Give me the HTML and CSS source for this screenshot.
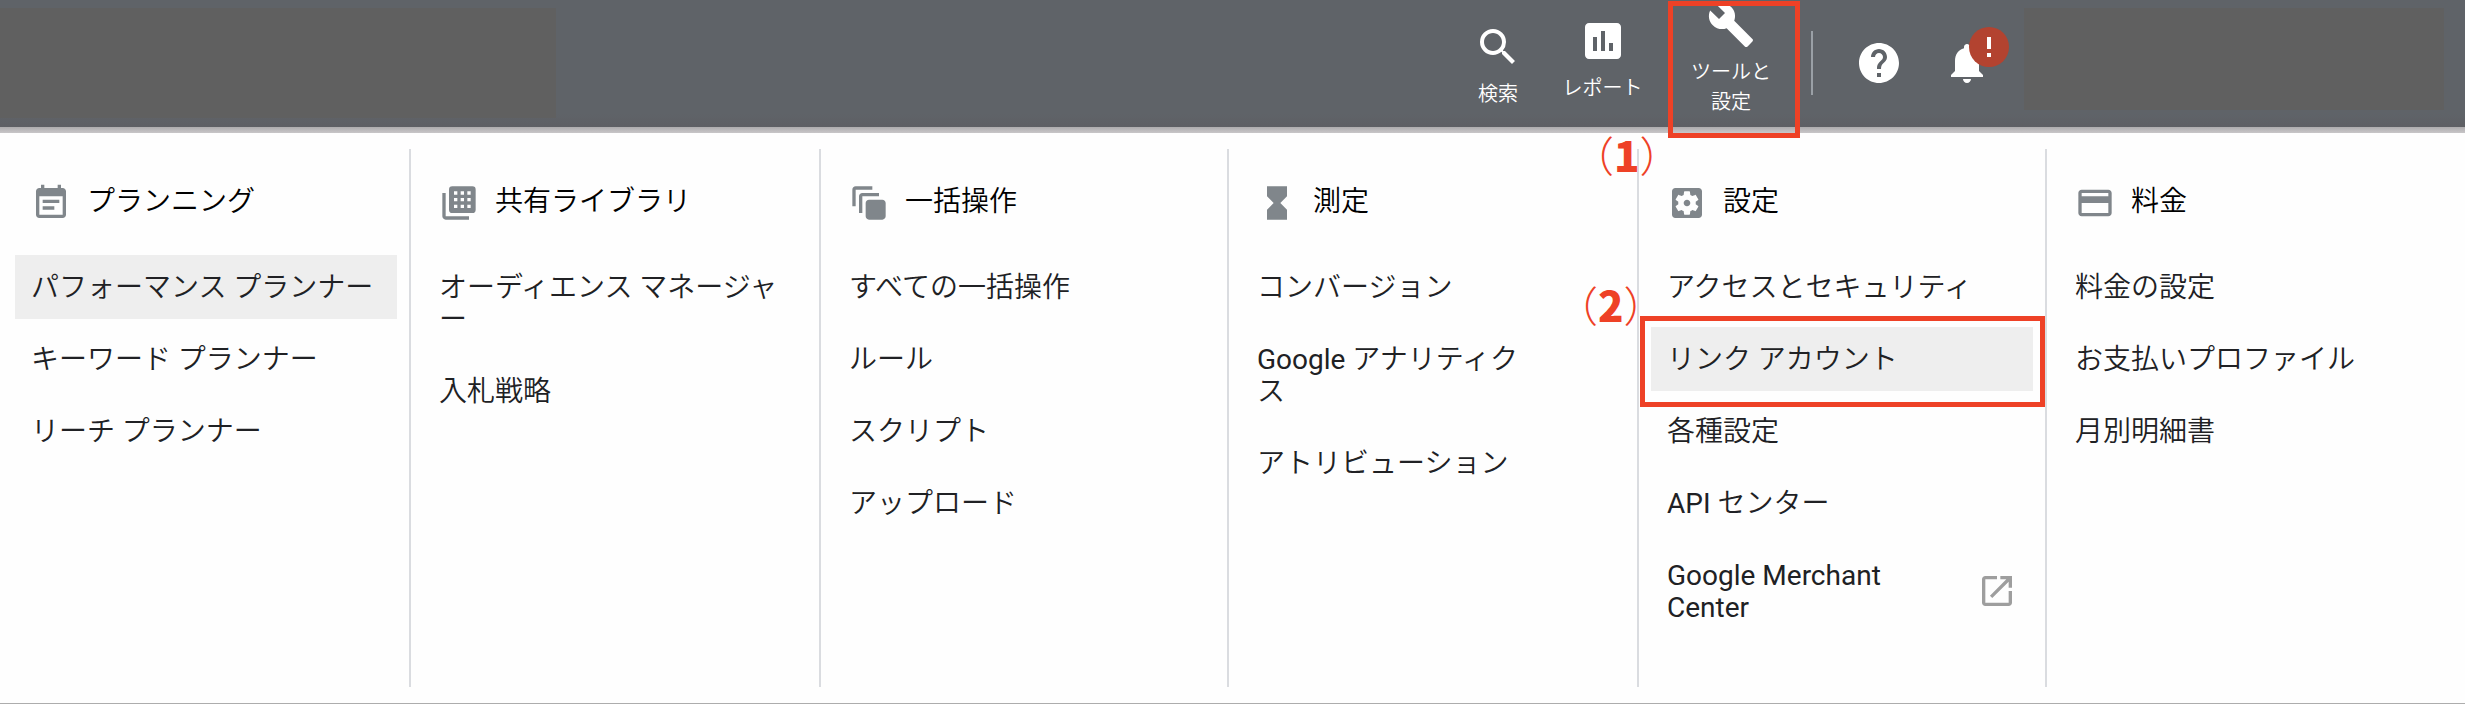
FILE: index.html
```html
<!DOCTYPE html>
<html lang="ja">
<head>
<meta charset="utf-8">
<title>ツールと設定</title>
<link rel="stylesheet" href="styles.css">
</head>
<body>
<header class="topbar">
  <div class="account-block"></div>
  <nav class="actions">
    <a class="action action-search">
      <svg class="icon-lg" viewBox="0 0 24 24"><path d="M15.5 14h-.79l-.28-.27A6.471 6.471 0 0 0 16 9.5 6.5 6.5 0 1 0 9.5 16c1.61 0 3.09-.59 4.23-1.57l.27.28v.79l5 4.99L20.49 19l-4.99-5zm-6 0C7.01 14 5 11.99 5 9.5S7.01 5 9.5 5 14 7.01 14 9.5 11.99 14 9.5 14z"/></svg>
      <span>検索</span>
    </a>
    <a class="action action-report">
      <svg class="icon-lg" viewBox="0 0 24 24"><path d="M19 3H5c-1.1 0-2 .9-2 2v14c0 1.1.9 2 2 2h14c1.1 0 2-.9 2-2V5c0-1.1-.9-2-2-2zM9 17H7v-7h2v7zm4 0h-2V7h2v10zm4 0h-2v-4h2v4z"/></svg>
      <span>レポート</span>
    </a>
    <a class="action action-tools">
      <svg class="icon-lg" viewBox="0 0 24 24"><path d="M22.7 19l-9.1-9.1c.9-2.3.4-5-1.5-6.9-2-2-5-2.4-7.4-1.3L9 6 6 9 1.6 4.7C.4 7.1.9 10.1 2.9 12.1c1.9 1.9 4.6 2.4 6.9 1.5l9.1 9.1c.4.4 1 .4 1.4 0l2.3-2.3c.5-.4.5-1.1.1-1.4z"/></svg>
      <span>ツールと<br>設定</span>
    </a>
  </nav>
  <div class="separator"></div>
  <svg class="icon-lg help" viewBox="0 0 24 24"><path d="M12 2C6.48 2 2 6.48 2 12s4.48 10 10 10 10-4.48 10-10S17.52 2 12 2zm1 17h-2v-2h2v2zm2.07-7.75l-.9.92C13.45 12.9 13 13.5 13 15h-2v-.5c0-1.1.45-2.1 1.17-2.83l1.24-1.26c.37-.36.59-.86.59-1.41 0-1.1-.9-2-2-2s-2 .9-2 2H8c0-2.21 1.79-4 4-4s4 1.79 4 4c0 .88-.36 1.68-.93 2.25z"/></svg>
  <div class="bell">
    <svg class="icon-lg" viewBox="0 0 24 24"><path d="M12 22c1.1 0 2-.9 2-2h-4c0 1.1.89 2 2 2zm6-6v-5c0-3.07-1.64-5.64-4.5-6.32V4c0-.83-.67-1.5-1.5-1.5s-1.5.67-1.5 1.5v.68C7.63 5.36 6 7.92 6 11v5l-2 2v1h16v-1l-2-2z"/></svg>
    <svg class="alert" viewBox="0 0 40 40"><circle cx="20" cy="20" r="20" fill="#b34330"/><path fill="#fff" d="M18 10h4v12h-4zM18 26h4v4h-4z"/></svg>
  </div>
  <div class="profile-block"></div>
</header>
<div class="shadow-strip"></div>

<main class="panel">
  <section class="column">
    <h2 class="heading">
      <svg class="icon" viewBox="0 0 24 24"><path d="M17 10H7v2h10v-2zm2-7h-1V1h-2v2H8V1H6v2H5c-1.11 0-2 .9-2 2v14c0 1.1.89 2 2 2h14c1.1 0 2-.9 2-2V5c0-1.1-.9-2-2-2zm0 16H5V8h14v11zm-5-5H7v2h7v-2z"/></svg>
      <span>プランニング</span>
    </h2>
    <a class="item active">パフォーマンス プランナー</a>
    <a class="item">キーワード プランナー</a>
    <a class="item">リーチ プランナー</a>
  </section>
  <section class="column">
    <h2 class="heading">
      <svg class="icon" viewBox="0 0 24 24"><path d="M4 6H2v14c0 1.1.9 2 2 2h14v-2H4V6z"/><path fill-rule="evenodd" d="M8 2h12a2 2 0 0 1 2 2v12a2 2 0 0 1-2 2H8a2 2 0 0 1-2-2V4a2 2 0 0 1 2-2zM9 5v2h2V5zm4 0v2h2V5zm4 0v2h2V5zM9 9v2h2V9zm4 0v2h2V9zm4 0v2h2V9zM9 13v2h2v-2zm4 0v2h2v-2zm4 0v2h2v-2z"/></svg>
      <span>共有ライブラリ</span>
    </h2>
    <a class="item">オーディエンス マネージャ<br>ー</a>
    <a class="item">入札戦略</a>
  </section>
  <section class="column narrow">
    <h2 class="heading">
      <svg class="icon" viewBox="0 0 24 24"><path d="M14 2H4c-1.11 0-2 .9-2 2v10h2V4h10V2zm4 4H8c-1.11 0-2 .9-2 2v10h2V8h10V6zm2 4h-8c-1.11 0-2 .9-2 2v8c0 1.1.89 2 2 2h8c1.1 0 2-.9 2-2v-8c0-1.1-.9-2-2-2z"/></svg>
      <span>一括操作</span>
    </h2>
    <a class="item">すべての一括操作</a>
    <a class="item">ルール</a>
    <a class="item">スクリプト</a>
    <a class="item">アップロード</a>
  </section>
  <section class="column">
    <h2 class="heading">
      <svg class="icon" viewBox="0 0 24 24"><path d="M6 2v6h.01L6 8.01 10 12l-4 4 .01.01H6V22h12v-5.99h-.01L18 16l-4-4 4-3.99-.01-.01H18V2H6z"/></svg>
      <span>測定</span>
    </h2>
    <a class="item">コンバージョン</a>
    <a class="item"><span class="latin">Google </span>アナリティク<br>ス</a>
    <a class="item">アトリビューション</a>
  </section>
  <section class="column narrow">
    <h2 class="heading">
      <svg class="icon" viewBox="0 0 24 24"><path d="M12 10c-1.1 0-2 .9-2 2s.9 2 2 2 2-.9 2-2-.9-2-2-2zm7-7H5c-1.11 0-2 .9-2 2v14c0 1.1.89 2 2 2h14c1.11 0 2-.9 2-2V5c0-1.1-.89-2-2-2zm-1.75 9c0 .23-.02.46-.05.68l1.48 1.16c.13.11.17.3.08.45l-1.4 2.42c-.09.15-.27.21-.43.15l-1.74-.7c-.36.28-.76.51-1.18.69l-.26 1.85c-.03.17-.18.3-.35.3h-2.8c-.17 0-.32-.13-.35-.29l-.26-1.85c-.43-.18-.82-.41-1.18-.69l-1.74.7c-.16.06-.34 0-.43-.15l-1.4-2.42c-.09-.15-.05-.34.08-.45l1.48-1.16c-.03-.23-.05-.46-.05-.69 0-.23.02-.46.05-.68l-1.48-1.16c-.13-.11-.17-.3-.08-.45l1.4-2.42c.09-.15.27-.21.43-.15l1.74.7c.36-.28.76-.51 1.18-.69l.26-1.85c.03-.17.18-.3.35-.3h2.8c.17 0 .32.13.35.29l.26 1.85c.43.18.82.41 1.18.69l1.74-.7c.16-.06.34 0 .43.15l1.4 2.42c.09.15.05.34-.08.45l-1.48 1.16c.03.23.05.46.05.69z"/></svg>
      <span>設定</span>
    </h2>
    <a class="item">アクセスとセキュリティ</a>
    <a class="item active">リンク アカウント</a>
    <a class="item">各種設定</a>
    <a class="item"><span class="latin">API </span>センター</a>
    <a class="item external"><span class="latin">Google Merchant<br>Center</span>
      <svg class="icon" viewBox="0 0 24 24"><path d="M19 19H5V5h7V3H5c-1.11 0-2 .9-2 2v14c0 1.1.89 2 2 2h14c1.1 0 2-.9 2-2v-7h-2v7zM14 3v2h3.59l-9.83 9.83 1.41 1.41L19 6.41V10h2V3h-7z"/></svg>
    </a>
  </section>
  <section class="column last">
    <h2 class="heading">
      <svg class="icon" viewBox="0 0 24 24"><path d="M20 4H4c-1.11 0-1.99.89-1.99 2L2 18c0 1.11.89 2 2 2h16c1.11 0 2-.89 2-2V6c0-1.11-.89-2-2-2zm0 14H4v-6h16v6zm0-10H4V6h16v2z"/></svg>
      <span>料金</span>
    </h2>
    <a class="item">料金の設定</a>
    <a class="item">お支払いプロファイル</a>
    <a class="item">月別明細書</a>
  </section>
</main>

<div class="callout callout-tools"></div>
<div class="callout callout-link"></div>
<div class="step step-one"><span class="open">（</span><b>1</b><span class="close">）</span></div>
<div class="step step-two"><span class="open">（</span><b>2</b><span class="close">）</span></div>
</body>
</html>
```
FILE: styles.css
```css
* { box-sizing: border-box; }

body {
  margin: 0;
  width: 2465px;
  height: 704px;
  overflow: hidden;
  position: relative;
  display: flex;
  flex-direction: column;
  background: #fefefe;
  color: #202124;
  font-family: Roboto, "Noto Sans CJK JP", sans-serif;
}

svg { display: block; flex: none; fill: currentColor; }
.icon { width: 40px; height: 40px; }
.icon-lg { width: 48px; height: 48px; }
.latin { font-weight: 400; }

/* Top bar */
.topbar {
  height: 127px;
  display: flex;
  align-items: flex-start;
  background: linear-gradient(#5f6368 0 114px, #5e5f64 127px);
  color: #fff;
}
.account-block { width: 556px; height: 110px; margin-top: 8px; background: #606060; }
.actions { display: flex; margin-left: 902px; }
.action {
  display: flex;
  flex-direction: column;
  align-items: center;
  font-size: 20px;
  line-height: 30px;
  text-align: center;
  font-weight: 350;
}
.action-search { width: 80px; padding-top: 23px; gap: 8px; }
.action-report { width: 129px; padding-top: 17px; gap: 8px; }
.action-tools { width: 128px; padding-top: 1px; gap: 8px; }
.separator { width: 2px; height: 64px; margin: 31px 0 0 16px; background: #9aa0a6; }
.help { margin: 39px 0 0 42px; }
.bell { position: relative; margin: 39px 0 0 40px; }
.alert { position: absolute; left: 26px; top: -12px; width: 40px; height: 40px; }
.profile-block { width: 420px; height: 102px; margin: 8px 0 0 33px; background: #606060; }
.shadow-strip { height: 6px; background: linear-gradient(#aeacae, #c8c6c8); }

/* Tools menu */
.panel {
  flex: 1;
  display: flex;
  padding: 16px 0 16px 3px;
  border-bottom: 1px solid #adadad;
}
.column {
  width: 410px;
  padding: 33px 12px 0;
  border-right: 2px solid #dadce0;
}
.column:first-child, .column.narrow { width: 408px; }
.column.last { border: 0; }
.heading {
  display: flex;
  align-items: center;
  gap: 16px;
  height: 42px;
  margin: 0 0 31px;
  padding-left: 16px;
  font-size: 28px;
  line-height: 42px;
  font-weight: 350;
  color: #000;
}
.heading .icon { color: #80868b; }
.heading span { padding-bottom: 2px; }
.item {
  display: block;
  margin-bottom: 8px;
  padding: 17px 0 15px 16px;
  font-size: 28px;
  line-height: 32px;
  font-weight: 350;
  white-space: nowrap;
}
.item.active { background: #eee; }
.item.external {
  display: flex;
  justify-content: space-between;
  align-items: center;
  padding-right: 16px;
}
.external .icon { margin-top: -2px; color: #9e9e9e; }

/* Annotations drawn over the page */
.callout { position: absolute; border: 5px solid #ee4126; }
.callout-tools { left: 1668px; top: 1px; width: 132px; height: 137px; }
.callout-link { left: 1640px; top: 316px; width: 405px; height: 91px; }
.step {
  position: absolute;
  display: flex;
  color: #ee4126;
  font-family: "Noto Sans CJK JP", sans-serif;
  font-size: 42px;
  line-height: 42px;
  font-weight: 300;
}
.step b { font-weight: 900; }
.step .open { margin-left: -28px; }
.step-one { left: 1600px; top: 133px; }
.step-two { left: 1584px; top: 283px; }
```
